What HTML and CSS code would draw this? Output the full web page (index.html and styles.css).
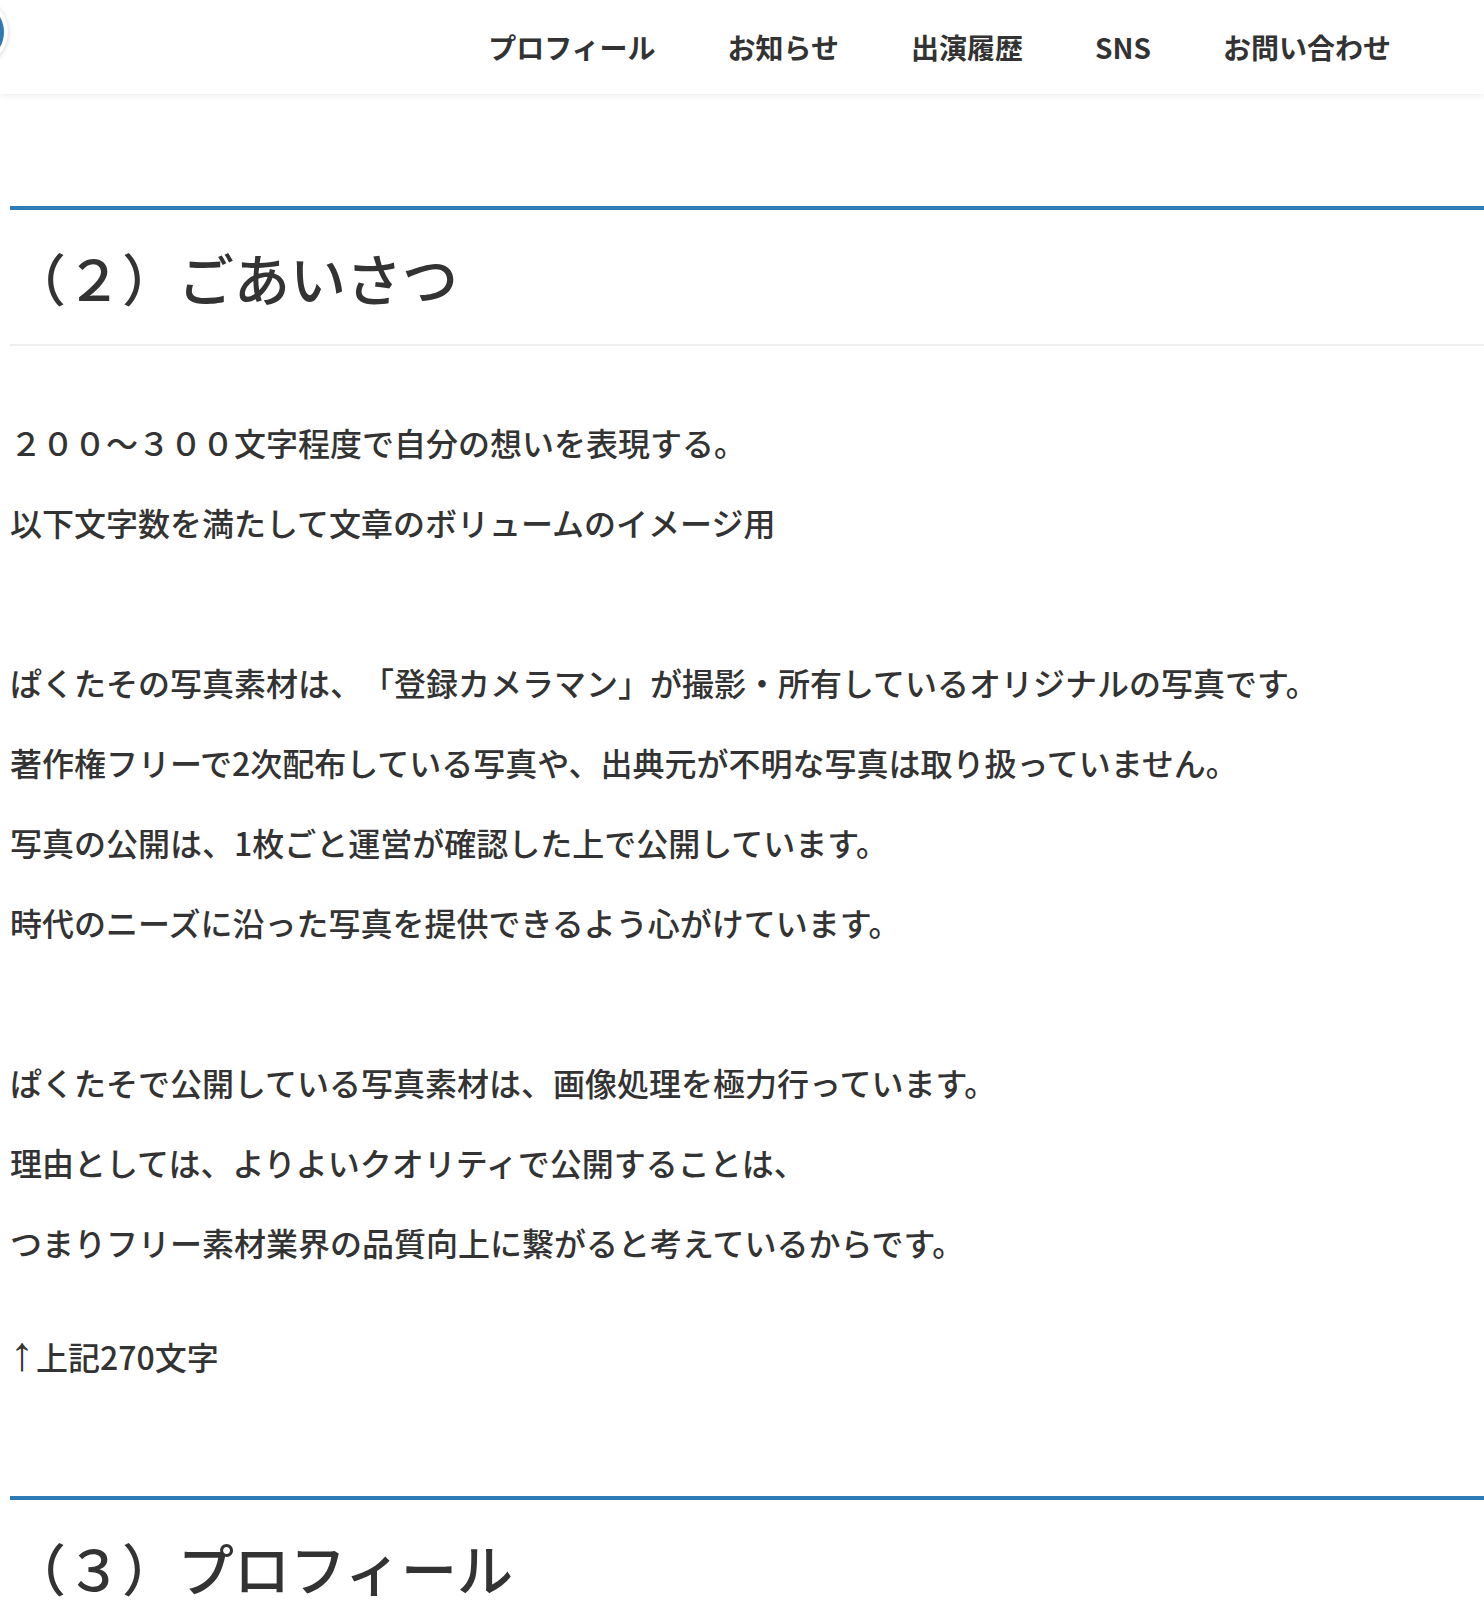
FILE: index.html
```html
<!DOCTYPE html>
<html lang="ja">
<head>
    <meta charset="UTF-8">
    <title>ごあいさつ</title>
    <meta name="viewport" content="width=device-width, initial-scale=1.0">
    <link rel="stylesheet" href="styles.css">
</head>
<body>
    <header class="site-header">
        <div class="logo"></div>
        <nav class="global-nav">
            <a href="#">プロフィール</a>
            <a href="#">お知らせ</a>
            <a href="#">出演履歴</a>
            <a href="#">SNS</a>
            <a href="#">お問い合わせ</a>
        </nav>
    </header>
    <main class="content">
        <section class="block">
            <h2 class="block-title">（２）ごあいさつ</h2>
            <p>２００～３００文字程度で自分の想いを表現する。</p>
            <p>以下文字数を満たして文章のボリュームのイメージ用</p>
            <p>&nbsp;</p>
            <p>ぱくたその写真素材は、「登録カメラマン」が撮影・所有しているオリジナルの写真です。</p>
            <p>著作権フリーで2次配布している写真や、出典元が不明な写真は取り扱っていません。</p>
            <p>写真の公開は、1枚ごと運営が確認した上で公開しています。</p>
            <p>時代のニーズに沿った写真を提供できるよう心がけています。</p>
            <p>&nbsp;</p>
            <p>ぱくたそで公開している写真素材は、画像処理を極力行っています。</p>
            <p>理由としては、よりよいクオリティで公開することは、</p>
            <p>つまりフリー素材業界の品質向上に繋がると考えているからです。</p>
            <p class="note"><span class="arrow">↑</span>上記270文字</p>
        </section>
        <section class="block">
            <h2 class="block-title">（３）プロフィール</h2>
        </section>
    </main>
</body>
</html>
```

FILE: styles.css
```css
body {
    margin: 0;
    padding: 0;
    background: #fff;
    color: #333;
    font-family: "Noto Sans CJK JP", "Noto Sans", sans-serif;
    text-spacing-trim: space-all;
    overflow: hidden;
}
.site-header {
    display: flex;
    align-items: center;
    height: 94px;
    background: #fff;
    box-shadow: 0 2px 6px rgba(0, 0, 0, 0.07);
    position: relative;
    z-index: 2;
}
.logo {
    align-self: flex-start;
    width: 60px;
    height: 60px;
    margin: -2px 0 0 -60px;
    border: 4px solid #fff;
    border-radius: 50%;
    background: #2d7ab5;
    box-shadow: 0 1px 5px rgba(0, 0, 0, 0.18);
    flex-shrink: 0;
}
.global-nav {
    display: flex;
    gap: 72px;
    margin: 0 93px 0 auto;
}
.global-nav a {
    color: #333;
    text-decoration: none;
    font-size: 28px;
    font-weight: 700;
    line-height: 40px;
}
.content {
    padding: 0 0 0 10px;
}
.block {
    margin-top: 116px;
}
.block:first-child {
    margin-top: 112px;
}
.block-title {
    margin: 0 0 72px 0;
    padding: 27px 0;
    border-top: 4px solid #2d7ab5;
    border-bottom: 2px solid #efefef;
    font-size: 56px;
    font-weight: 500;
    line-height: 80px;
    color: #333;
}
.block p {
    margin: 0 0 32px 0;
    font-size: 32px;
    font-weight: 500;
    line-height: 48px;
}
.block p.note {
    margin-top: 66px;
}
.arrow {
    font-family: "Liberation Sans", sans-serif;
    font-size: 48px;
    font-weight: 700;
    line-height: 0;
    margin-right: 2px;
}
```
